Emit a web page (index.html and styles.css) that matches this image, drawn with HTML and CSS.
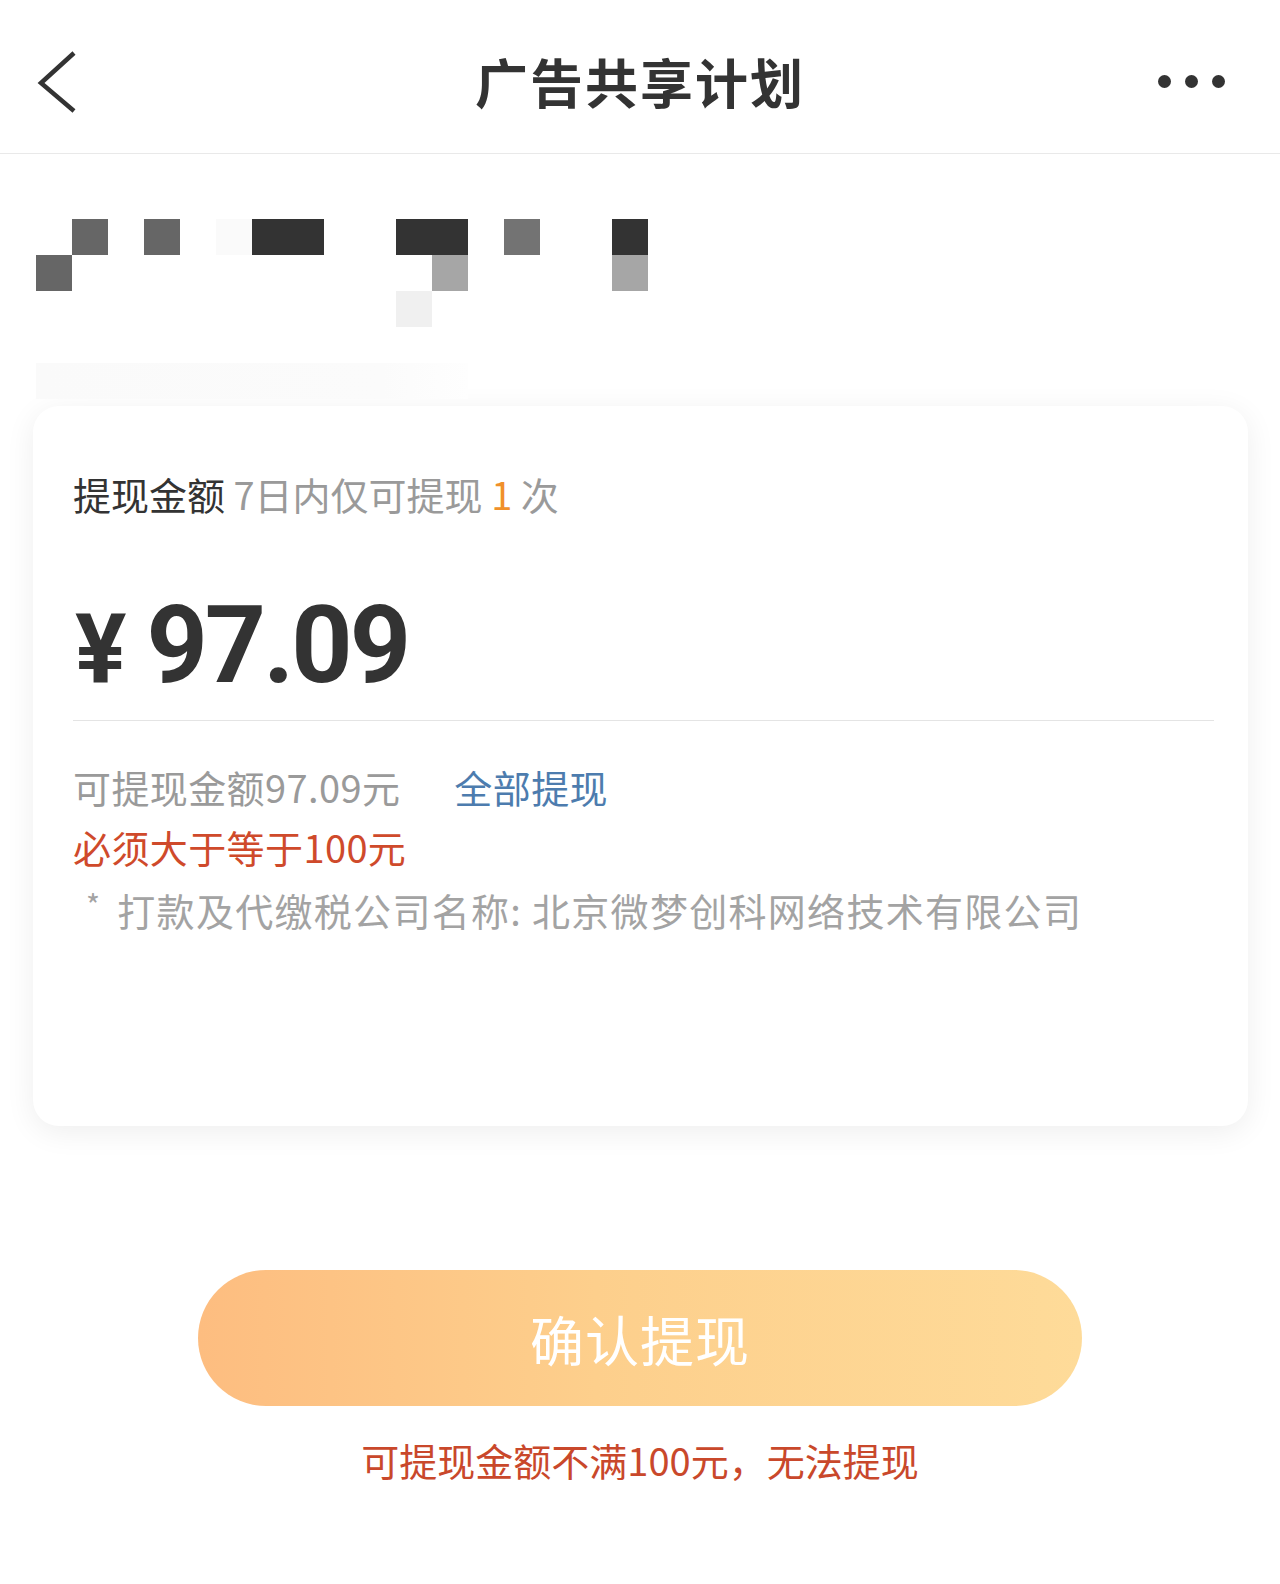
FILE: index.html
```html
<!DOCTYPE html>
<html lang="zh-CN">
<head>
<meta charset="utf-8">
<title>广告共享计划</title>
<link rel="stylesheet" href="styles.css">
</head>
<body>
<header class="topbar">
  <svg class="back" width="44" height="64" viewBox="0 0 44 64"><polyline points="38,4 5,34 38,62" fill="none" stroke="#333" stroke-width="4.5" stroke-linejoin="miter"/></svg>
  <h1 class="title">广告共享计划</h1>
  <div class="more"><span></span><span></span><span></span></div>
</header>

<div class="mosaic">
  <i class="px c1 r1 g66"></i>
  <i class="px c3 r1 g66"></i>
  <i class="px c5 r1 gfa"></i>
  <i class="px c6 r1 g33 w2"></i>
  <i class="px c10 r1 g33 w2"></i>
  <i class="px c13 r1 g73"></i>
  <i class="px c16 r1 g33"></i>
  <i class="px c0 r2 g66"></i>
  <i class="px c11 r2 ga6"></i>
  <i class="px c16 r2 ga6"></i>
  <i class="px c10 r3 gf0"></i>
  <i class="px c0 r5 gfb w12"></i>
</div>

<section class="card">
  <div class="row head">提现金额 <span class="muted">7日内仅可提现 <span class="orange">1</span> 次</span></div>
  <div class="amount"><span class="yen">¥</span><span class="num">97.09</span></div>
  <div class="divider"></div>
  <div class="row avail"><span class="muted">可提现金额97.09元</span><a class="all">全部提现</a></div>
  <div class="row warn">必须大于等于100元</div>
  <div class="row note"><span class="star">*</span>打款及代缴税公司名称: 北京微梦创科网络技术有限公司</div>
</section>

<div class="btn-wrap"><button class="confirm">确认提现</button></div>
<p class="tip">可提现金额不满100元，无法提现</p>
</body>
</html>
```

FILE: styles.css
```css
* { box-sizing: border-box; }
html, body { margin: 0; padding: 0; background: #fff; }
body {
  width: 1280px;
  height: 1584px;
  font-family: "Noto Sans CJK SC", "Noto Sans", sans-serif;
  color: #333;
  overflow: hidden;
}

.topbar {
  height: 154px;
  border-bottom: 1px solid #e9e9e9;
  display: flex;
  align-items: center;
  justify-content: space-between;
  padding: 0 55px 0 36px;
  position: relative;
}
.back { display: block; margin-top: 8px; }
.title {
  position: absolute;
  left: 0; right: 0;
  top: 0; bottom: 0;
  margin: 0;
  padding-top: 8px;
  display: flex;
  align-items: center;
  justify-content: center;
  font-size: 53px;
  font-weight: 700;
  color: #333;
  letter-spacing: 2px;
  pointer-events: none;
}
.more { display: flex; gap: 14px; position: relative; z-index: 1; margin-top: 10px; }
.more span { width: 13px; height: 13px; border-radius: 50%; background: #333; display: block; }

.mosaic {
  margin: 65px 0 0 36px;
  display: grid;
  grid-template-columns: repeat(18, 36px);
  grid-template-rows: repeat(5, 36px);
  width: 648px;
}
.px { display: block; }
.c0 { grid-column-start: 1; } .c1 { grid-column-start: 2; } .c3 { grid-column-start: 4; }
.c5 { grid-column-start: 6; } .c6 { grid-column-start: 7; } .c10 { grid-column-start: 11; }
.c11 { grid-column-start: 12; } .c13 { grid-column-start: 14; } .c16 { grid-column-start: 17; }
.r1 { grid-row: 1; } .r2 { grid-row: 2; } .r3 { grid-row: 3; } .r5 { grid-row: 5; }
.w2 { grid-column-end: span 2; }
.w12 { grid-column-end: span 12; }
.g33 { background: #333; } .g66 { background: #666; } .g73 { background: #737373; }
.ga6 { background: #a6a6a6; } .gf0 { background: #f0f0f0; } .gfa { background: #fafafa; }
.gfb { background: linear-gradient(90deg, #fafafa 0%, #fbfbfb 80%, #fefefe 100%); }

.card {
  margin: 7px 0 0 33px;
  width: 1215px;
  height: 720px;
  background: #fff;
  border-radius: 26px;
  box-shadow: 0 6px 30px rgba(0, 0, 0, 0.07);
  padding: 58px 40px 0 40px;
}
.row { font-size: 38px; line-height: 60px; white-space: nowrap; }
.head { color: #333; }
.muted { color: #9a9a9a; }
.orange { color: #f0902a; }
.amount {
  margin-top: 68px;
  height: 107px;
  line-height: 107px;
  display: flex;
  align-items: baseline;
  color: #333;
  font-family: Roboto, "Noto Sans", sans-serif;
  font-weight: 700;
}
.yen { font-size: 96px; margin-right: 20px; margin-left: 2px; }
.num { font-size: 107px; letter-spacing: -3px; }
.divider { margin-top: 21px; height: 1px; background: #e4e4e4; width: 1141px; }
.avail { margin-top: 36px; display: flex; letter-spacing: 0.4px; }
.all { color: #4d7cae; margin-left: 54px; }
.warn { color: #cf4a2b; margin-top: 0; letter-spacing: 0.4px; }
.note { color: #a3a3a3; margin-top: 3px; display: flex; letter-spacing: 1.3px; }
.star { font-size: 30px; margin: -6px 16px 0 13px; }

.btn-wrap { display: flex; justify-content: center; margin-top: 144px; }
.confirm {
  width: 884px;
  height: 136px;
  border: none;
  border-radius: 68px;
  background: linear-gradient(90deg, #fdbd80 0%, #fdcf8c 45%, #fedb99 100%);
  color: #fff;
  font-family: "Noto Sans CJK SC", sans-serif;
  font-size: 54px;
  letter-spacing: 1px;
  padding: 0;
}
.tip {
  margin: 24px 0 0 0;
  text-align: center;
  font-size: 38px;
  line-height: 60px;
  color: #c9482b;
}
```
